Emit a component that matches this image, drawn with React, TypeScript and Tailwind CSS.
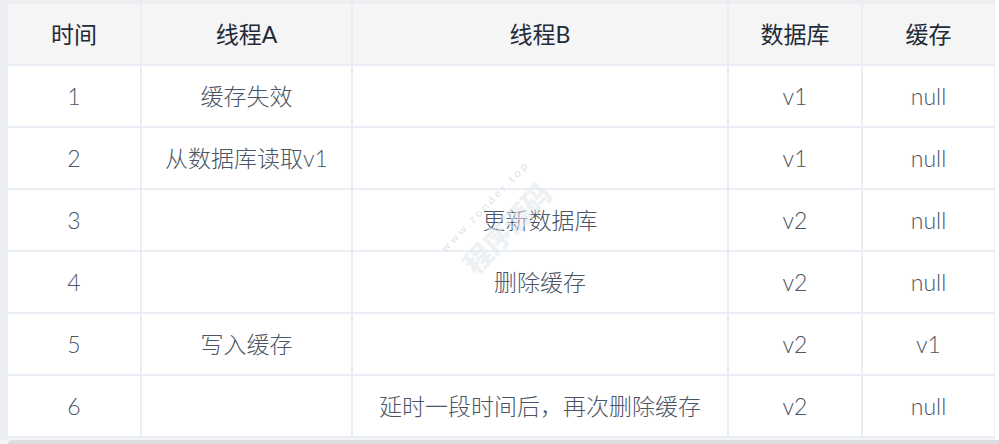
import React from "react";

const rows: [string, string, string, string, string][] = [
  ["1", "缓存失效", "", "v1", "null"],
  ["2", "从数据库读取v1", "", "v1", "null"],
  ["3", "", "更新数据库", "v2", "null"],
  ["4", "", "删除缓存", "v2", "null"],
  ["5", "写入缓存", "", "v2", "v1"],
  ["6", "", "延时一段时间后，再次删除缓存", "v2", "null"],
];

const headers = ["时间", "线程A", "线程B", "数据库", "缓存"];

const font = {
  fontFamily: 'Lato, "Noto Sans CJK SC", "Noto Sans", sans-serif',
};

export default function App() {
  return (
    <div className="relative w-[999px] h-[444px] overflow-hidden bg-[#f3f4f6]" style={font}>
      <div className="flex h-[440px]">
        <div className="w-[6px] bg-[#eceef1]" />
        <div className="flex flex-col w-[988px]">
          <div className="h-[4px] bg-[#eceef1]" />
          <div className="grid grid-cols-[134px_211px_376px_134px_133px] bg-white border-l-2 border-[#e9eef4]">
            {headers.map((h) => (
              <div
                key={h}
                className="h-[62px] flex items-center justify-center bg-[#f5f5f6] border-r-2 border-b-2 border-[#e9eef4] text-[23px] font-normal text-[#1f2a37]"
              >
                {h}
              </div>
            ))}
            {rows.map((r, i) =>
              r.map((c, j) => (
                <div
                  key={`${i}-${j}`}
                  className="h-[62px] flex items-center justify-center border-r-2 border-b-2 border-[#e9eef4] text-[23px] font-light text-[#4b5565]"
                >
                  {c}
                </div>
              ))
            )}
          </div>
        </div>
        <div className="flex-1 bg-white border-l border-[#eef0f3]" />
      </div>
      <div className="ml-[8px] h-[4px] rounded-tl-[4px] bg-[#dcdde0]" />

      {/* watermark */}
      <div className="pointer-events-none absolute left-[422px] top-[198px] w-[126px] text-center -rotate-[46deg] text-[11px] tracking-[3px] text-[#cfd5db]/70">
        www.zonder.top
      </div>
      <div className="pointer-events-none absolute left-[437px] top-[208px] w-[140px] text-center -rotate-[46deg] text-[28px] leading-[40px] font-black text-[#e3e9ee]/60">
        程序源码
      </div>
    </div>
  );
}
